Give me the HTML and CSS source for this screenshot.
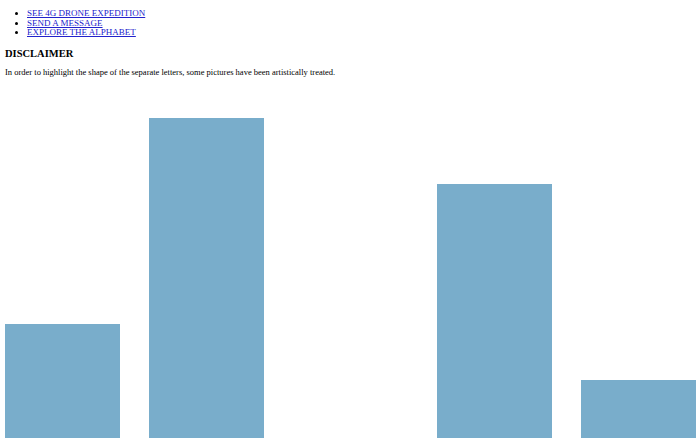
FILE: index.html
```html
<!DOCTYPE html>
<html>
<head>
<meta charset="utf-8">
<link rel="stylesheet" href="styles.css">
</head>
<body>
<ul class="nav">
  <li><a href="#">SEE 4G DRONE EXPEDITION</a></li>
  <li><a href="#">SEND A MESSAGE</a></li>
  <li><a href="#">EXPLORE THE ALPHABET</a></li>
</ul>
<h2 class="title">DISCLAIMER</h2>
<p class="text">In order to highlight the shape of the separate letters, some pictures have been artistically treated.</p>
<div class="bars">
  <div class="bar" style="height:161px"></div>
  <div class="bar" style="height:367px"></div>
  <div class="bar" style="height:0"></div>
  <div class="bar" style="height:301px"></div>
  <div class="bar" style="height:105px"></div>
</div>
</body>
</html>
```
FILE: styles.css
```css
html, body {
  margin: 0;
  padding: 0;
  background: #ffffff;
}
body {
  padding: 0 5px;
  font-family: "Liberation Serif", "Times New Roman", serif;
  color: #000;
}
.nav {
  margin: 9px 0 0 0;
  padding-left: 22px;
  font-size: 9px;
  line-height: 9.5px;
}
.nav a {
  color: #2222cc;
}
.title {
  margin: 9px 0 0 0;
  font-size: 10.5px;
  line-height: 13px;
  font-weight: bold;
}
.text {
  margin: 7px 0 0 0;
  font-size: 8.5px;
  line-height: 11px;
}
.bars {
  display: flex;
  align-items: flex-end;
  gap: 29px;
  height: 400px;
  margin-top: 7px;
}
.bar {
  width: 115px;
  flex: none;
  background: #79adcb;
}
```
